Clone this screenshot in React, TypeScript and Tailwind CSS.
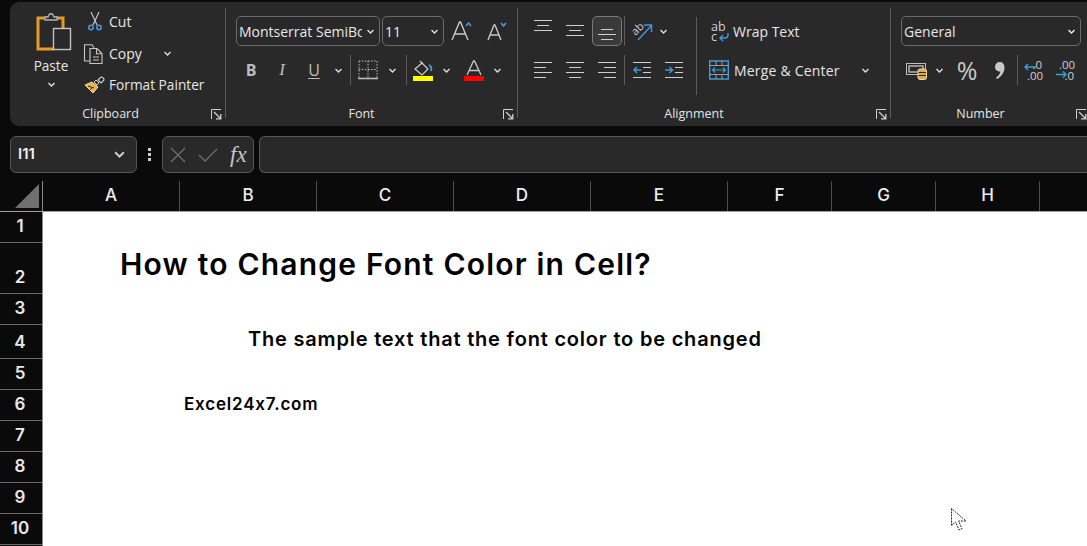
import React from "react";

const Chev = ({ c = "#e0e0e0", s = 9 }: { c?: string; s?: number }) => (
  <svg width={s} height={s} viewBox="0 0 9 9" fill="none" stroke={c} strokeWidth="1.4"><path d="M1.5 3l3 3 3-3" /></svg>
);
const Launcher = () => (
  <svg width="11" height="11" viewBox="0 0 11 11" fill="none" stroke="#d0d0d0" strokeWidth="1">
    <path d="M.5 10V.5H10" /><path d="M3 3l6.5 6.5M5 9.8h4.8V5" strokeWidth="1.3" />
  </svg>
);
const Sep = () => <div className="w-px h-[110px] mt-[6px] bg-[#5c5c5c] shrink-0" />;
const VLine = ({ h = "h-[30px]" }: { h?: string }) => <div className={`w-px ${h} bg-[#5c5c5c] shrink-0`} />;

const Lines = ({ kind }: { kind: "top" | "mid" | "bot" | "l" | "c" | "r" }) => {
  const g = "#cfcfcf";
  const m: Record<string, string> = {
    top: "M0 1.5h18M3 6.5h12M0 11.5h18",
    mid: "M0 4.5h18M3 9.5h12M0 14.5h18",
    bot: "M3 6.5h12M0 11.5h18M3 16.5h12",
    l: "M0 1.5h18M0 6.5h12M0 11.5h18M0 16.5h12",
    c: "M0 1.5h18M3 6.5h12M0 11.5h18M3 16.5h12",
    r: "M0 1.5h18M6 6.5h12M0 11.5h18M6 16.5h12",
  };
  return <svg width="18" height="18" viewBox="0 0 18 18" fill="none" stroke={g} strokeWidth="1.2"><path d={m[kind]} /></svg>;
};

const PasteIcon = () => (
  <svg width="36" height="38" viewBox="0 0 36 38" fill="none">
    <path d="M12 5H2v31h16" stroke="#e99a24" strokeWidth="3" />
    <path d="M20 5h7v10" stroke="#e99a24" strokeWidth="3" />
    <path d="M9 7V4h3l1.5-3h3L18 4h3v3z" fill="#292929" stroke="#b5b5b5" strokeWidth="1.3" />
    <rect x="17.5" y="15.5" width="17" height="21" fill="#292929" stroke="#c4c4c4" strokeWidth="1.4" />
  </svg>
);
const CutIcon = () => (
  <svg width="16" height="20" viewBox="0 0 16 20" fill="none">
    <path d="M4 1l6 13M12 1L6 14" stroke="#cfcfcf" strokeWidth="1.1" />
    <circle cx="4" cy="16.5" r="2.2" stroke="#4b9cdc" strokeWidth="1.5" />
    <circle cx="12" cy="16.5" r="2.2" stroke="#4b9cdc" strokeWidth="1.5" />
  </svg>
);
const CopyIcon = () => (
  <svg width="20" height="20" viewBox="0 0 20 20" fill="none" stroke="#c8c8c8" strokeWidth="1.1">
    <path d="M7 17H1.5V.8H9l2 3" />
    <path d="M7 4.5h7l5 5v10H7z" />
    <path d="M13.5 4.8v5h5M10 13h6M10 16h6" />
  </svg>
);
const PainterIcon = () => (
  <svg width="21" height="19" viewBox="0 0 21 19" fill="none">
    <path d="M1 9l8 8 5-6-6-5z" fill="#f0b04a" stroke="#f6d9a2" strokeWidth="1" />
    <path d="M4 10l6 2M6 14l3-3" stroke="#292929" strokeWidth="1" />
    <path d="M10 6l2-2 3 3-2 2z" fill="#292929" stroke="#d0d0d0" />
    <path d="M14 4l3-3c2 0 3 1 3 3l-3 3z" fill="#292929" stroke="#d0d0d0" strokeWidth="1.1" />
  </svg>
);
const BigA = ({ up }: { up: boolean }) => (
  <svg width="22" height="22" viewBox="0 0 22 22" fill="none">
    <path d={up ? "M1 20L8.5 2h1L17 20M4 14h10" : "M1 20L7 5h1l6 15M3.5 15h9"} stroke="#c8c8c8" strokeWidth="1.4" />
    <path d={up ? "M15 6l2.5-3L20 6" : "M14 3l2.5 3L19 3"} stroke="#4b9cdc" strokeWidth="1.5" />
  </svg>
);
const Borders = () => (
  <svg width="20" height="20" viewBox="0 0 20 20" fill="none" stroke="#bdbdbd" strokeWidth="1">
    <path d="M1 1h18M1 1v17M19 1v17M10 1v17M1 9.5h18" strokeDasharray="1.5 1.5" />
    <path d="M0 18.5h20" strokeWidth="1.6" />
  </svg>
);
const FillIcon = () => (
  <svg width="20" height="21" viewBox="0 0 20 21" fill="none">
    <path d="M2 9l7-6 6 6-6 6-7-6z" stroke="#d0d0d0" strokeWidth="1.2" />
    <path d="M7 1l3 3" stroke="#d0d0d0" strokeWidth="1.2" />
    <path d="M16 5c2 1 3 3 2 6" stroke="#4b9cdc" strokeWidth="1.8" />
    <rect y="16" width="20" height="5" fill="#ffff00" />
  </svg>
);
const FontColor = () => (
  <svg width="20" height="21" viewBox="0 0 20 21" fill="none">
    <path d="M3 15L9.5 1h1L17 15M5.5 10.5h9" stroke="#c8c8c8" strokeWidth="1.3" />
    <rect y="16" width="20" height="5" fill="#ff0000" />
  </svg>
);
const Orient = () => (
  <svg width="22" height="20" viewBox="0 0 22 20" fill="none">
    <text x="0" y="12" fontSize="11" fill="#cfcfcf" transform="rotate(-45 6 8)" fontFamily="Open Sans, sans-serif">ab</text>
    <path d="M7 19L20 5M13 4h7.5v7" stroke="#3d9be0" strokeWidth="1.4" />
  </svg>
);
const Indent = ({ inc }: { inc: boolean }) => (
  <svg width="18" height="18" viewBox="0 0 18 18" fill="none">
    <path d="M0 1.5h18M10 6.5h8M10 11.5h8M0 16.5h18" stroke="#cfcfcf" strokeWidth="1.2" />
    <path d={inc ? "M0 9h7M4.5 6l3 3-3 3" : "M1 9h7M4 6L1 9l3 3"} stroke="#3d9be0" strokeWidth="1.5" />
  </svg>
);
const WrapIcon = () => (
  <svg width="19" height="21" viewBox="0 0 19 21" fill="none">
    <text x="0" y="10" fontSize="12.5" fill="#cfcfcf" fontFamily="Open Sans, sans-serif">ab</text>
    <text x="0" y="20" fontSize="12.5" fill="#cfcfcf" fontFamily="Open Sans, sans-serif">c</text>
    <path d="M17 12v2a3 3 0 0 1-3 3H9M12 14l-3 3 3 3" stroke="#3d9be0" strokeWidth="1.4" />
  </svg>
);
const MergeIcon = () => (
  <svg width="20" height="20" viewBox="0 0 20 20" fill="none">
    <path d="M.7 1h18.6v18H.7z" stroke="#3d9be0" strokeWidth="1.4" />
    <path d="M0 5.5h20M0 14.5h20M7 1v4M13 1v4M7 15v4M13 15v4" stroke="#9c9c9c" strokeWidth="1" />
    <path d="M3.5 10h13M6 7.5L3.5 10 6 12.5M14 7.5l2.5 2.5-2.5 2.5" stroke="#3d9be0" strokeWidth="1.2" />
  </svg>
);
const Accounting = () => (
  <svg width="21" height="19" viewBox="0 0 21 19" fill="none">
    <rect x=".5" y="2.5" width="19" height="11" fill="#292929" stroke="#bdbdbd" />
    <rect x="3" y="5" width="14" height="6" stroke="#bdbdbd" strokeWidth="1.4" />
    <rect x="12" y="8" width="8.5" height="10.5" rx="2" fill="#e0a94c" stroke="#f5dba6" />
    <path d="M12.5 11.5h7.5M12.5 14.5h7.5" stroke="#292929" />
  </svg>
);
const DecIcon = ({ inc }: { inc: boolean }) => (
  <svg width="20" height="20" viewBox="0 0 20 20" fill="none">
    {inc ? (
      <>
        <text x="3" y="9" fontSize="11.5" fill="#cfcfcf" fontFamily="Open Sans, sans-serif">.00</text>
        <text x="8.5" y="19.5" fontSize="11.5" fill="#cfcfcf" fontFamily="Open Sans, sans-serif">.0</text>
        <path d="M0 14.5h10M7 11.5l3 3-3 3" stroke="#3d9be0" strokeWidth="1.5" />
      </>
    ) : (
      <>
        <text x="8.5" y="9" fontSize="11.5" fill="#cfcfcf" fontFamily="Open Sans, sans-serif">.0</text>
        <text x="3" y="19.5" fontSize="11.5" fill="#cfcfcf" fontFamily="Open Sans, sans-serif">.00</text>
        <path d="M1 7h11M4 4L1 7l3 3" stroke="#3d9be0" strokeWidth="1.5" />
      </>
    )}
  </svg>
);
const Comma = () => (
  <svg width="11" height="17" viewBox="0 0 11 17" fill="#c8c8c8">
    <path d="M5.5 0C8.5 0 10.5 2 10.5 5.5c0 5-3.5 9.5-7.5 11.5l-1-1.3c2.5-1.7 4-3.7 4.4-6.2C3 9.5 1 7.5 1 5 1 2 3 0 5.5 0z" />
  </svg>
);

const GroupLabel = ({ children, cls = "", text = "", lw = "w-[14px]" }: { children: string; cls?: string; text?: string; lw?: string }) => (
  <div className={`flex items-center h-[20px] mt-auto mb-[2px] ${cls}`}>
    <div className={`flex-1 text-center text-[12.5px] leading-[20px] text-[#e4e4e4] ${text}`}>{children}</div>
    <div className={`${lw} flex`}><Launcher /></div>
  </div>
);

const Select = ({ w, children }: { w: string; children: React.ReactNode }) => (
  <div className={`${w} h-[30px] flex items-center justify-between pl-[2px] pr-[4px] rounded-[5px] border border-[#6a6a6a] text-[14px] text-[#e8e8e8] shrink-0 overflow-hidden whitespace-nowrap`}>
    {children}
  </div>
);

const cols = [
  ["A", "w-[137px]"], ["B", "w-[137px]"], ["C", "w-[137px]"], ["D", "w-[137px]"], ["E", "w-[137px]"],
  ["F", "w-[104px]"], ["G", "w-[104px]"], ["H", "w-[104px]"], ["", "w-[60px]"],
];

type R = { n: string; h: string; text?: string; cls?: string };
const rows: R[] = [
  { n: "1", h: "h-[31px]" },
  { n: "2", h: "h-[51px]", text: "How to Change Font Color in Cell?", cls: "pl-[77px] pb-[8px] text-[30px] tracking-[1.2px] leading-[44px] font-semibold" },
  { n: "3", h: "h-[31px]" },
  { n: "4", h: "h-[34px]", text: "The sample text that the font color to be changed", cls: "pl-[205px] pb-[5px] text-[20px] tracking-[0.8px] font-semibold" },
  { n: "5", h: "h-[31px]" },
  { n: "6", h: "h-[31px]", text: "Excel24x7.com", cls: "pl-[141px] pb-[4px] text-[17px] tracking-[0.8px] font-semibold" },
  { n: "7", h: "h-[31px]" },
  { n: "8", h: "h-[31px]" },
  { n: "9", h: "h-[31px]" },
  { n: "10", h: "h-[31px]" },
  { n: "", h: "h-[31px]" },
];

export default function App() {
  return (
    <div className="relative w-[1087px] h-[546px] overflow-hidden bg-[#0a0a0a] font-['Open_Sans',sans-serif]">
      {/* Ribbon */}
      <div className="pt-[2px] pl-[10px] h-[126px]">
        <div className="flex h-[124px] bg-[#292929] rounded-l-[9px] text-[#e6e6e6] text-[14px] whitespace-nowrap">
          {/* Clipboard */}
          <div className="w-[215px] shrink-0 flex flex-col">
            <div className="flex pt-[8px]">
              <div className="w-[72px] flex flex-col items-center pl-[10px] pt-[3px]">
                <div className="ml-[6px]"><PasteIcon /></div>
                <div className="mt-[5px] leading-[19px] text-[13.6px]">Paste</div>
                <div className="mt-[5px]"><Chev /></div>
              </div>
              <div className="flex flex-col pl-[2px]">
                <div className="h-[22px] flex items-center"><div className="w-[21px] flex justify-center"><CutIcon /></div><span className="ml-[4px]">Cut</span></div>
                <div className="h-[21px] mt-[11px] flex items-center"><div className="w-[21px] -ml-[1px]"><CopyIcon /></div><span className="ml-[5px]">Copy</span><span className="ml-[21px]"><Chev /></span></div>
                <div className="h-[21px] mt-[11px] flex items-center"><div className="w-[21px]"><PainterIcon /></div><span className="ml-[4px] text-[13.7px]">Format Painter</span></div>
              </div>
            </div>
            <GroupLabel>Clipboard</GroupLabel>
          </div>
          <Sep />
          {/* Font */}
          <div className="w-[291px] shrink-0 flex flex-col pl-[10px]">
            <div className="flex items-center mt-[14px] gap-[2px]">
              <Select w="w-[144px]"><span className="w-[123px] overflow-hidden">Montserrat SemiBold</span><Chev /></Select>
              <Select w="w-[62px]"><span>11</span><Chev /></Select>
              <div className="ml-[5px]"><BigA up /></div>
              <div className="ml-[12px]"><BigA up={false} /></div>
            </div>
            <div className="flex items-center h-[32px] mt-[8px]">
              <div className="w-[30px] text-center font-bold text-[16px] text-[#bdbdbd]">B</div>
              <div className="w-[32px] text-center italic text-[17px] text-[#bdbdbd] font-['Liberation_Serif',serif]">I</div>
              <div className="w-[32px] text-center text-[16px] text-[#bdbdbd] underline underline-offset-2">U</div>
              <div className="w-[16px] flex justify-center"><Chev /></div>
              <div className="ml-[4px]"><VLine /></div>
              <div className="ml-[7px]"><Borders /></div>
              <div className="w-[28px] flex justify-center"><Chev /></div>
              <VLine />
              <div className="ml-[6px]"><FillIcon /></div>
              <div className="w-[26px] flex justify-center"><Chev /></div>
              <div className="ml-[5px]"><FontColor /></div>
              <div className="w-[26px] flex justify-center"><Chev /></div>
            </div>
            <GroupLabel cls="-ml-[10px]" text="pr-[6px]">Font</GroupLabel>
          </div>
          <Sep />
          {/* Alignment */}
          <div className="w-[372px] shrink-0 flex flex-col">
            <div className="flex">
              <div className="w-[178px] pl-[16px] pt-[14px] shrink-0">
                <div className="flex items-center h-[30px]">
                  <div className="w-[32px] flex pb-[6px]"><Lines kind="top" /></div>
                  <div className="w-[26px] flex pb-[2px]"><Lines kind="mid" /></div>
                  <div className="w-[30px] h-[30px] flex justify-center items-center rounded-[5px] border border-[#7a7a7a] bg-[#3a3a3a] pt-[2px]"><Lines kind="bot" /></div>
                  <div className="ml-[2px]"><VLine /></div>
                  <div className="ml-[6px]"><Orient /></div>
                  <div className="ml-[6px]"><Chev /></div>
                </div>
                <div className="flex items-center h-[32px] mt-[8px]">
                  <div className="w-[32px]"><Lines kind="l" /></div>
                  <div className="w-[32px]"><Lines kind="c" /></div>
                  <div className="w-[24px]"><Lines kind="r" /></div>
                  <div className="ml-[2px]"><VLine /></div>
                  <div className="ml-[8px]"><Indent inc={false} /></div>
                  <div className="ml-[14px]"><Indent inc /></div>
                </div>
              </div>
              <div className="mt-[15px] h-[78px]"><VLine h="h-[78px]" /></div>
              <div className="flex flex-col pt-[14px] pl-[12px]">
                <div className="h-[30px] flex items-center pl-[2px]"><WrapIcon /><span className="ml-[3px]">Wrap Text</span></div>
                <div className="h-[32px] mt-[8px] flex items-center"><MergeIcon /><span className="ml-[5px] tracking-[0.2px]">Merge &amp; Center</span><span className="ml-[21px]"><Chev /></span></div>
              </div>
            </div>
            <GroupLabel text="pr-[6px]">Alignment</GroupLabel>
          </div>
          <Sep />
          {/* Number */}
          <div className="flex-1 min-w-0 flex flex-col pl-[10px]">
            <div className="mt-[14px]">
              <Select w="w-[180px]"><span>General</span><Chev c="#f0f0f0" /></Select>
            </div>
            <div className="flex items-center h-[32px] mt-[8px]">
              <div className="ml-[5px]"><Accounting /></div>
              <div className="ml-[8px]"><Chev /></div>
              <div className="ml-[11px] w-[24px] text-center text-[25px] leading-[30px] text-[#c8c8c8]">%</div>
              <div className="ml-[10px] w-[20px] flex justify-center"><Comma /></div>
              <div className="ml-[8px]"><VLine /></div>
              <div className="ml-[6px]"><DecIcon inc={false} /></div>
              <div className="ml-[12px]"><DecIcon inc /></div>
            </div>
            <GroupLabel cls="-ml-[10px]" text="pr-[6px]" lw="w-[11px]">Number</GroupLabel>
          </div>
        </div>
      </div>

      {/* Formula bar */}
      <div className="flex items-center h-[37px] mt-[10px] pl-[10px]">
        <div className="w-[127px] h-[37px] flex items-center justify-between pl-[7px] pr-[10px] rounded-[6px] border border-[#565656] bg-[#292929] text-[15px] font-semibold text-[#f0f0f0] font-['Inter',sans-serif]">
          <span>I11</span><Chev c="#cfcfcf" s={13} />
        </div>
        <div className="w-[25px] flex flex-col items-center gap-[2px]">
          <div className="w-[3px] h-[3px] bg-[#cfcfcf]" /><div className="w-[3px] h-[3px] bg-[#cfcfcf]" /><div className="w-[3px] h-[3px] bg-[#cfcfcf]" />
        </div>
        <div className="w-[92px] h-[37px] flex items-center pl-[7px] rounded-[6px] border border-[#565656] bg-[#292929]">
          <svg width="16" height="16" viewBox="0 0 16 16" fill="none" stroke="#6f6f6f" strokeWidth="1.3"><path d="M1 1l14 14M15 1L1 15" /></svg>
          <svg className="ml-[12px]" width="20" height="16" viewBox="0 0 20 16" fill="none" stroke="#6f6f6f" strokeWidth="1.3"><path d="M1 8l6 6L19 2" /></svg>
          <span className="ml-[12px] italic text-[23px] leading-none text-[#c8c8c8] font-['Liberation_Serif',serif]">fx</span>
        </div>
        <div className="flex-1 h-[37px] ml-[5px] rounded-l-[6px] border border-r-0 border-[#565656] bg-[#292929]" />
      </div>

      {/* Column headers */}
      <div className="flex h-[31px] mt-[8px] border-b border-[#a0a0a0] bg-[#0a0a0a]">
        <div className="w-[43px] shrink-0 border-r border-[#8a8a8a] flex items-end justify-end pr-[3px] pb-[3px]">
          <svg width="24" height="24" viewBox="0 0 24 24"><path d="M24 0v24H0z" fill="#707070" /></svg>
        </div>
        {cols.map(([c, w], i) => (
          <div key={i} className={`${w} shrink-0 border-r border-[#4e4e4e] text-center text-[17px] leading-[28px] font-medium text-[#eeeeee] font-['Inter',sans-serif]`}>{c}</div>
        ))}
      </div>

      {/* Sheet */}
      <div className="font-['Inter',sans-serif] [font-feature-settings:'calt'_0]">
        {rows.map((r) => (
          <div key={r.n} className={`flex ${r.h}`}>
            <div className="w-[43px] shrink-0 flex items-end justify-center pb-[4px] pr-[2px] border-r border-[#8a8a8a] bg-[#0a0a0a] text-[17px] leading-[26px] font-semibold text-[#e8e8e8] shadow-[inset_0_-1px_0_#6a6a6a]">
              {r.n}
            </div>
            <div className={`flex-1 bg-white text-black whitespace-nowrap ${r.text ? "flex items-end" : ""} ${r.cls ?? ""}`}>{r.text}</div>
          </div>
        ))}
      </div>

      {/* Mouse pointer */}
      <svg className="absolute left-[951px] top-[508px]" width="16" height="25" viewBox="0 0 16 25" fill="#fff" stroke="#222" strokeWidth="1" strokeDasharray="2 1">
        <path d="M.5.5v17l4-3.5 3.5 8 3-1.5-3.5-7.5H15z" />
      </svg>
    </div>
  );
}
